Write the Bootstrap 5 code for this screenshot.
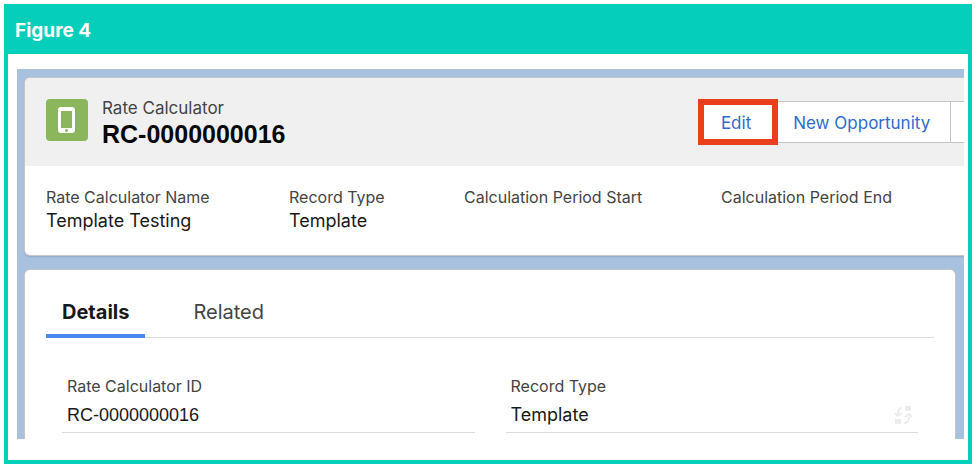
<!DOCTYPE html>
<html lang="en">
<head>
<meta charset="utf-8">
<meta name="viewport" content="width=device-width, initial-scale=1">
<title>Figure 4</title>
<link href="https://cdn.jsdelivr.net/npm/bootstrap@5.3.0/dist/css/bootstrap.min.css" rel="stylesheet">
<style>
body { font-family: Inter, "Liberation Sans", sans-serif; color: #181818; background: #fff; }
.figure-frame { border: 4px solid #05cebb; }
.figure-title { background: #05cebb; color: #fff; font: 700 19px/46px Inter, sans-serif; padding: 0 7px; }
.figure-content { padding: 15px 4px 21px 9px; }
.canvas { background: #a8c1de; padding: 9px 0 0 8px; }
.panel { background: #fff; border-radius: 5px; box-shadow: 0 0 0 1px #c4c6ca; }
.panel-flush { border-radius: 5px 0 0 5px; overflow: hidden; box-shadow: 0 0 0 1px #c4c6ca, 0 2px 2px #8fa9c5; }
.record-panel { margin: 15px 9px 0 0; border-radius: 5px 5px 0 0; padding: 20px 21px 6px; }
.record-head { background: #f0f0f0; padding: 21px 0 15px 21px; }
.object-icon { width: 42px; height: 42px; margin-right: 14px; }
.object-name { font-size: 17px; line-height: 18px; color: #444; }
.record-id { font: 700 25px/34px "Liberation Sans", Arial, sans-serif; color: #080808; }
.action { font-size: 17px; line-height: 24px; color: #2f6bcb; background: #fff; border: 1px solid #c4c4c4; border-radius: 0; padding: 9px 20px 7px 15px; margin: 2px 0; }
.action:hover { background: #f5f8fd; color: #2f6bcb; }
.action-marked { border: 6px solid #ea3f1d; padding: 6px 21px 4px 17px; margin: 0; }
.action-more { border-width: 1px 0; padding: 9px 4px 7px; }
.summary { display: grid; grid-template-columns: 243fr 175fr 257fr 243fr; padding: 19px 0 22px 21px; }
.field-label { font-size: 16px; line-height: 24px; font-weight: 400; color: #444; }
.field-value { font-size: 18px; line-height: 24px; }
.tab-row { border-bottom: 1px solid #dcdcdc; gap: 32px; }
.tab-item { font-size: 20px; line-height: 44px; color: #444; border: 0; border-bottom: 4px solid transparent; background: none; padding: 0 16px; margin-bottom: -1px; }
.tab-item.active { color: #181818; font-weight: 700; border-color: #4d87f0; }
.field-grid { gap: 31px; padding: 36px 16px 0; }
.field-cell { border-bottom: 1px solid #dcdcdc; padding: 0 5px; }
.field-cell .field-value { line-height: 34px; }
.id-value { font-family: "Liberation Sans", Arial, sans-serif; }
</style>
<script src="https://cdn.jsdelivr.net/npm/bootstrap@5.3.0/dist/js/bootstrap.bundle.min.js"></script>
</head>
<body>
<main class="p-1">
  <section class="figure-frame">
    <h1 class="figure-title m-0">Figure 4</h1>
    <div class="figure-content">
      <div class="canvas overflow-hidden">
        <section class="panel panel-flush">
          <header class="record-head d-flex align-items-start">
            <svg class="object-icon flex-shrink-0" viewBox="0 0 42 42" aria-hidden="true">
              <rect width="42" height="42" rx="4" fill="#8bb65b"/>
              <path fill="#fff" fill-rule="evenodd" d="M15 8h11a3 3 0 0 1 3 3v20a3 3 0 0 1-3 3H15a3 3 0 0 1-3-3V11a3 3 0 0 1 3-3zM15 12v17h11V12zM20.500 30a1.500 1.500 0 1 0 0 3 1.500 1.500 0 0 0 0-3z"/>
            </svg>
            <div class="flex-grow-1">
              <div class="object-name">Rate Calculator</div>
              <h2 class="record-id m-0">RC-0000000016</h2>
            </div>
            <div class="d-flex flex-shrink-0">
              <button type="button" class="btn action action-marked">Edit</button>
              <button type="button" class="btn action border-start-0">New Opportunity</button>
              <button type="button" class="btn action action-more" aria-label="More actions">&nbsp;</button>
            </div>
          </header>
          <dl class="summary m-0">
            <div><dt class="field-label">Rate Calculator Name</dt><dd class="field-value m-0">Template Testing</dd></div>
            <div><dt class="field-label">Record Type</dt><dd class="field-value m-0">Template</dd></div>
            <div><dt class="field-label">Calculation Period Start</dt></div>
            <div><dt class="field-label">Calculation Period End</dt></div>
          </dl>
        </section>
        <section class="panel record-panel">
          <div class="tab-row d-flex" role="tablist">
            <button type="button" class="tab-item active" role="tab" aria-selected="true">Details</button>
            <button type="button" class="tab-item" role="tab" aria-selected="false">Related</button>
          </div>
          <dl class="field-grid d-flex m-0">
            <div class="field-cell flex-fill w-50">
              <dt class="field-label">Rate Calculator ID</dt>
              <dd class="field-value id-value m-0">RC-0000000016</dd>
            </div>
            <div class="field-cell flex-fill w-50">
              <dt class="field-label">Record Type</dt>
              <dd class="field-value m-0 d-flex justify-content-between align-items-center">Template
                <svg width="20" height="20" viewBox="0 0 20 20" fill="none" stroke="#ececec" stroke-width="2" aria-hidden="true">
                  <path d="M9 3C6 3 5 5 5 9M2 8l3 3 4-3M11 18c3 0 5-2 5-6M12 12l4-3 3 3"/>
                  <path fill="#ececec" stroke="none" d="M12 1h6v5h-6zM2 14h6v5H2z"/>
                </svg>
              </dd>
            </div>
          </dl>
        </section>
      </div>
    </div>
  </section>
</main>
</body>
</html>
